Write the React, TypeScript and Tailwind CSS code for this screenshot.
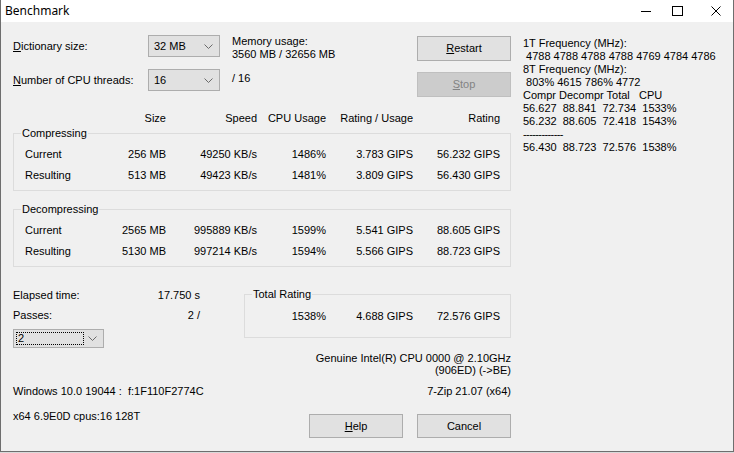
import type { ReactNode } from "react";

const cols = ["w-[53px]", "w-[91px]", "w-[69px]", "w-[87px]", "w-[87px]"];

function Chevron() {
  return (
    <svg width="9" height="5" viewBox="0 0 9 5" className="shrink-0">
      <path d="M0.5 0.5 L4.5 4.5 L8.5 0.5" fill="none" stroke="#6a6a6a" strokeWidth="1" />
    </svg>
  );
}

function Combo({ value, className, focused }: { value: string; className: string; focused?: boolean }) {
  return (
    <div className={`flex items-center justify-between border border-[#adadad] bg-[#e1e1e1] pr-[6px] ${className}`}>
      {focused ? (
        <span className="ml-[2px] flex h-[13px] w-[68px] items-center border border-dotted border-black pl-[1px] leading-[11px]">
          {value}
        </span>
      ) : (
        <span className="pl-[5px]">{value}</span>
      )}
      <Chevron />
    </div>
  );
}

function WinButton({ children, disabled, className = "" }: { children: ReactNode; disabled?: boolean; className?: string }) {
  return (
    <button
      type="button"
      className={`flex w-[94px] items-center justify-center border ${
        disabled ? "border-[#bfbfbf] bg-[#cccccc] text-[#838383]" : "border-[#adadad] bg-[#e1e1e1]"
      } ${className}`}
    >
      {children}
    </button>
  );
}

function Group({ title, children, className = "" }: { title: string; children: ReactNode; className?: string }) {
  return (
    <fieldset className={`border border-[#dcdcdc] ${className}`}>
      <legend className="ml-[7px] px-[1px] leading-[13px]">{title}</legend>
      {children}
    </fieldset>
  );
}

function Row({ label, values }: { label: string; values: string[] }) {
  return (
    <div className="flex h-[21px] items-center">
      <div className="w-[99px] pl-[11px]">{label}</div>
      {values.map((v, i) => (
        <div key={i} className={`${cols[i]} text-right`}>
          {v}
        </div>
      ))}
    </div>
  );
}

const freqLines = [
  "1T Frequency (MHz):",
  " 4788 4788 4788 4788 4769 4784 4786",
  "8T Frequency (MHz):",
  " 803% 4615 786% 4772",
  "Compr Decompr Total   CPU",
  "56.627  88.841  72.734  1533%",
  "56.232  88.605  72.418  1543%",
  "-------------",
  "56.430  88.723  72.576  1538%",
];

export default function App() {
  return (
    <div className="h-[453px] w-[734px] bg-[#d9d9d9] font-['Liberation_Sans',Arial,sans-serif] text-[11px] text-black">
      <div className="flex h-[452px] w-[734px] flex-col border-x border-b border-[#6e6e6e] bg-[#f0f0f0]">
        {/* title bar */}
        <div className="flex h-[22px] shrink-0 items-center bg-white">
          <span className="pl-[4px] font-['Noto_Sans',sans-serif] text-[12px]">Benchmark</span>
          <div className="ml-auto flex items-center pr-[12px]">
            <svg width="10" height="10" viewBox="0 0 10 10">
              <path d="M0 5.5 H10" stroke="#000" strokeWidth="1" />
            </svg>
            <svg width="11" height="10" viewBox="0 0 11 10" className="ml-[21px]">
              <rect x="0.5" y="0.5" width="10" height="9" fill="none" stroke="#000" strokeWidth="1" />
            </svg>
            <svg width="10" height="10" viewBox="0 0 10 10" className="ml-[28px]">
              <path d="M0.5 0.5 L9.5 9.5 M9.5 0.5 L0.5 9.5" stroke="#000" strokeWidth="1" />
            </svg>
          </div>
        </div>

        <div className="flex px-[12px] pt-[13px]">
          {/* left column */}
          <div className="flex w-[498px] flex-col">
            <div className="flex items-start">
              <div className="flex flex-col gap-[12px]">
                <div className="flex h-[22px] items-center">
                  <span className="w-[135px]">
                    <u>D</u>ictionary size:
                  </span>
                  <Combo value="32 MB" className="h-[22px] w-[72px]" />
                </div>
                <div className="flex h-[22px] items-center">
                  <span className="w-[135px]">
                    <u>N</u>umber of CPU threads:
                  </span>
                  <Combo value="16" className="h-[22px] w-[72px]" />
                </div>
              </div>
              <div className="ml-[12px] flex flex-col leading-[13px]">
                <span>Memory usage:</span>
                <span>3560 MB / 32656 MB</span>
                <span className="mt-[11px]">/ 16</span>
              </div>
              <div className="ml-auto flex flex-col">
                <WinButton className="mt-[1px] h-[25px]">
                  <span>
                    <u>R</u>estart
                  </span>
                </WinButton>
                <WinButton disabled className="mt-[11px] h-[25px]">
                  <span>
                    <u>S</u>top
                  </span>
                </WinButton>
              </div>
            </div>

            <div className="mt-[15px] flex h-[13px] items-center leading-[13px]">
              <div className="w-[100px]" />
              {["Size", "Speed", "CPU Usage", "Rating / Usage", "Rating"].map((h, i) => (
                <div key={h} className={`${cols[i]} text-right`}>
                  {h}
                </div>
              ))}
            </div>

            <Group title="Compressing" className="mt-[2px] pb-[4px]">
              <div className="pt-[4px]">
                <Row label="Current" values={["256 MB", "49250 KB/s", "1486%", "3.783 GIPS", "56.232 GIPS"]} />
                <Row label="Resulting" values={["513 MB", "49423 KB/s", "1481%", "3.809 GIPS", "56.430 GIPS"]} />
              </div>
            </Group>

            <Group title="Decompressing" className="mt-[12px] pb-[4px]">
              <div className="pt-[4px]">
                <Row label="Current" values={["2565 MB", "995889 KB/s", "1599%", "5.541 GIPS", "88.605 GIPS"]} />
                <Row label="Resulting" values={["5130 MB", "997214 KB/s", "1594%", "5.566 GIPS", "88.723 GIPS"]} />
              </div>
            </Group>

            <div className="mt-[18px] flex items-start">
              <div className="flex w-[187px] flex-col">
                <div className="flex h-[20px] items-center justify-between">
                  <span>Elapsed time:</span>
                  <span>17.750 s</span>
                </div>
                <div className="flex h-[20px] items-center justify-between">
                  <span>Passes:</span>
                  <span>2 /</span>
                </div>
                <Combo value="2" focused className="mt-[4px] h-[19px] w-[91px]" />
              </div>
              <Group title="Total Rating" className="ml-auto mt-[3px] w-[267px] pb-[10px]">
                <div className="mt-[5px] flex h-[21px] items-center">
                  <div className="w-[81px] text-right">1538%</div>
                  <div className="w-[87px] text-right">4.688 GIPS</div>
                  <div className="w-[87px] text-right">72.576 GIPS</div>
                </div>
              </Group>
            </div>

            <div className="mt-[4px] flex flex-col items-end leading-[12px]">
              <span>Genuine Intel(R) CPU 0000 @ 2.10GHz</span>
              <span>(906ED) (-&gt;BE)</span>
            </div>

            <div className="mt-[9px] flex justify-between leading-[13px]">
              <span className="whitespace-pre">Windows 10.0 19044 :  f:1F110F2774C</span>
              <span>7-Zip 21.07 (x64)</span>
            </div>

            <div className="flex items-start">
              <span className="mt-[12px] leading-[13px]">x64 6.9E0D cpus:16 128T</span>
              <div className="ml-auto mt-[16px] flex gap-[14px]">
                <WinButton className="h-[24px]">
                  <span>
                    <u>H</u>elp
                  </span>
                </WinButton>
                <WinButton className="h-[24px]">Cancel</WinButton>
              </div>
            </div>
          </div>

          {/* right column */}
          <div className="ml-[12px] flex flex-col pt-[2px] leading-[13px]">
            {freqLines.map((l, i) => (
              <span key={i} className={`whitespace-pre ${l.startsWith("-") ? "tracking-[-0.6px]" : ""}`}>
                {l}
              </span>
            ))}
          </div>
        </div>
      </div>
    </div>
  );
}
